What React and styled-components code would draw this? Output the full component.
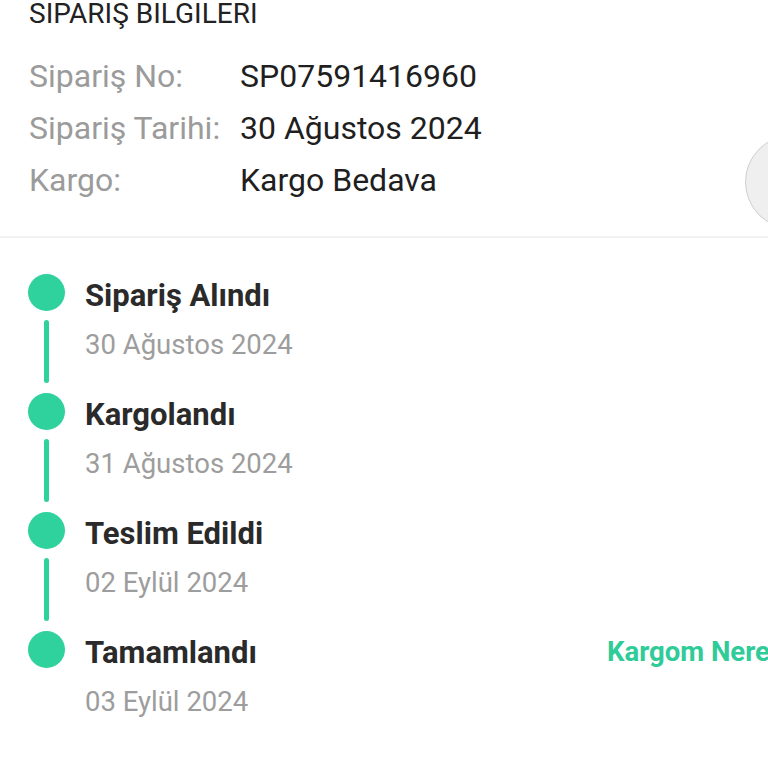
import React from "react";
import styled, { createGlobalStyle } from "styled-components";

const Global = createGlobalStyle`
  html, body {
    margin: 0;
    padding: 0;
    background: #ffffff;
    overflow: hidden;
  }
  body {
    font-family: Roboto, "Noto Sans", Arial, sans-serif;
  }
`;

const GREEN = "#2fd29d";

const Page = styled.div`
  position: relative;
  width: 768px;
  min-height: 768px;
  background: #ffffff;
`;

const Header = styled.section`
  padding: 0 29px 30px;
  border-bottom: 2px solid #f2f2f2;
`;

const Title = styled.h2`
  margin: 0 0 23px;
  font-size: 28px;
  line-height: 27px;
  font-weight: 400;
  color: #222222;
  white-space: nowrap;
`;

const InfoRow = styled.div`
  display: grid;
  grid-template-columns: 211px auto;
  height: 52px;
  align-items: center;
  font-size: 32px;
  line-height: 52px;
  white-space: nowrap;
`;

const Label = styled.span`
  color: #9b9b9b;
`;

const Value = styled.span`
  color: #1f1f1f;
`;

const FloatButton = styled.div`
  position: absolute;
  left: 745px;
  top: 135px;
  width: 94px;
  height: 94px;
  border-radius: 50%;
  background: #efefef;
  border: 1.5px solid #cfcfcf;
  box-sizing: border-box;
`;

const Timeline = styled.ol`
  list-style: none;
  margin: 0;
  padding: 36px 0 0 28px;
`;

const Step = styled.li`
  display: flex;
  gap: 20px;
  height: 119px;
`;

const Marker = styled.div`
  display: flex;
  flex-direction: column;
  align-items: center;
  width: 37px;
  flex: none;
`;

const Dot = styled.span`
  width: 37px;
  height: 37px;
  border-radius: 50%;
  background: ${GREEN};
`;

const Line = styled.span`
  width: 5px;
  height: 63px;
  margin-top: 9px;
  border-radius: 3px;
  background: ${GREEN};
`;

const Content = styled.div`
  padding-top: 4px;
  flex: 1;
  min-width: 0;
`;

const StepHead = styled.div`
  display: grid;
  grid-template-columns: 522px auto;
  align-items: center;
  white-space: nowrap;
`;

const StepTitle = styled.div`
  font-size: 31px;
  line-height: 36px;
  font-weight: 700;
  color: #2a2a2a;
`;

const StepLink = styled.a`
  font-size: 27.5px;
  font-weight: 700;
  color: #2fcb98;
  text-decoration: none;
  margin-top: -3px;
`;

const StepDate = styled.div`
  margin-top: 14px;
  font-size: 27.5px;
  line-height: 34px;
  color: #9d9d9d;
  white-space: nowrap;
`;

const info = [
  ["Sipariş No:", "SP07591416960"],
  ["Sipariş Tarihi:", "30 Ağustos 2024"],
  ["Kargo:", "Kargo Bedava"],
];

const steps = [
  { title: "Sipariş Alındı", date: "30 Ağustos 2024" },
  { title: "Kargolandı", date: "31 Ağustos 2024" },
  { title: "Teslim Edildi", date: "02 Eylül 2024" },
  { title: "Tamamlandı", date: "03 Eylül 2024", link: "Kargom Nerede?" },
];

export default function App() {
  return (
    <Page>
      <Global />
      <Header>
        <Title>SIPARIŞ BILGILERI</Title>
        {info.map(([l, v]) => (
          <InfoRow key={l}>
            <Label>{l}</Label>
            <Value>{v}</Value>
          </InfoRow>
        ))}
      </Header>
      <FloatButton />
      <Timeline>
        {steps.map((s, i) => (
          <Step key={s.title}>
            <Marker>
              <Dot />
              {i < steps.length - 1 && <Line />}
            </Marker>
            <Content>
              <StepHead>
                <StepTitle>{s.title}</StepTitle>
                {s.link && <StepLink href="#">{s.link}</StepLink>}
              </StepHead>
              <StepDate>{s.date}</StepDate>
            </Content>
          </Step>
        ))}
      </Timeline>
    </Page>
  );
}
